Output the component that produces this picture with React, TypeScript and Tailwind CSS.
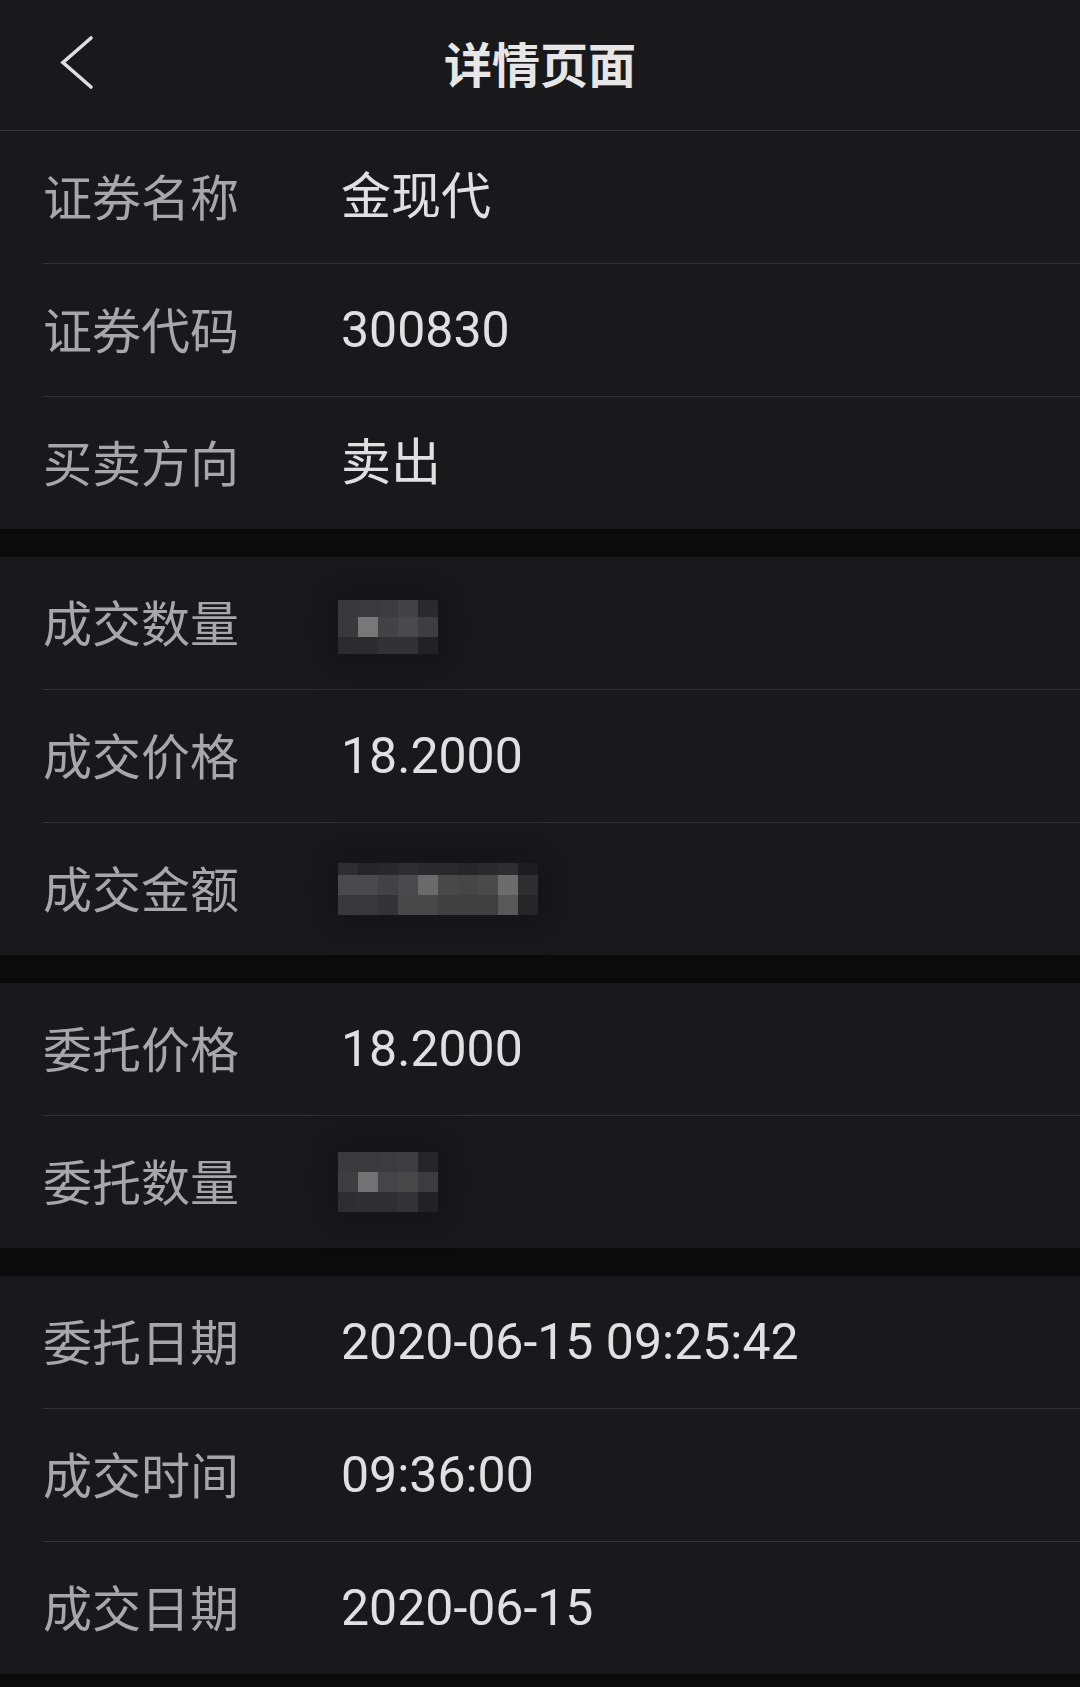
import React from "react";

type MosaicRow = { h: string; cells: string[] };

const mosaicQty: MosaicRow[] = [
  { h: "h-[17px]", cells: ["bg-[#39393b]", "bg-[#3a3a3c]", "bg-[#3c3c3e]", "bg-[#434345]", "bg-[#2a2a2c]"] },
  { h: "h-[20px]", cells: ["bg-[#39393b]", "bg-[#787878]", "bg-[#434345]", "bg-[#4a4a4c]", "bg-[#3e3e40]"] },
  { h: "h-[17px]", cells: ["bg-[#2c2c2e]", "bg-[#2c2c2e]", "bg-[#323234]", "bg-[#323234]", "bg-[#222224]"] },
];

const mosaicAmount: MosaicRow[] = [
  {
    h: "h-[12px]",
    cells: ["bg-[#2e2e30]", "bg-[#262628]", "bg-[#28282a]", "bg-[#2e2e30]", "bg-[#2a2a2c]", "bg-[#2a2a2c]", "bg-[#262628]", "bg-[#2a2a2c]", "bg-[#2e2e30]", "bg-[#1c1c1e]"],
  },
  {
    h: "h-[20px]",
    cells: ["bg-[#4a4a4c]", "bg-[#4a4a4c]", "bg-[#434345]", "bg-[#4a4a4c]", "bg-[#6a6a6a]", "bg-[#484848]", "bg-[#464646]", "bg-[#4a4a4a]", "bg-[#6c6c6c]", "bg-[#2e2e30]"],
  },
  {
    h: "h-[20px]",
    cells: ["bg-[#39393b]", "bg-[#39393b]", "bg-[#333335]", "bg-[#474747]", "bg-[#474747]", "bg-[#404040]", "bg-[#404040]", "bg-[#404040]", "bg-[#585858]", "bg-[#262628]"],
  },
];

const mosaicOrder: MosaicRow[] = [
  { h: "h-[20px]", cells: ["bg-[#3a3a3c]", "bg-[#3a3a3c]", "bg-[#3c3c3e]", "bg-[#3e3e40]", "bg-[#262628]"] },
  { h: "h-[20px]", cells: ["bg-[#3e3e40]", "bg-[#727272]", "bg-[#454547]", "bg-[#484849]", "bg-[#3c3c3e]"] },
  { h: "h-[20px]", cells: ["bg-[#2e2e30]", "bg-[#303032]", "bg-[#303032]", "bg-[#343436]", "bg-[#222224]"] },
];

function Mosaic({ rows, className }: { rows: MosaicRow[]; className?: string }) {
  return (
    <div className={"flex flex-col blur-[0.6px] shadow-[0_0_30px_12px_rgba(14,14,16,0.3)] " + (className ?? "")}>
      {rows.map((r, i) => (
        <div key={i} className={"flex " + r.h}>
          {r.cells.map((c, j) => (
            <div key={j} className={"w-[20px] h-full " + c} />
          ))}
        </div>
      ))}
    </div>
  );
}

type Item = { label: string; value?: string; mosaic?: React.ReactNode };

function Row({ item, first }: { item: Item; first: boolean }) {
  return (
    <div className="pl-[43px] bg-[#19191b]">
      <div
        className={
          "flex items-center " +
          (first ? "h-[132px]" : "h-[133px] border-t border-[#323234]")
        }
      >
        <div
          className="w-[298px] shrink-0 text-[49px] leading-none text-[#a7a7a9] mb-[5px]"
          style={{ fontFamily: '"Noto Sans CJK SC", sans-serif' }}
        >
          {item.label}
        </div>
        {item.value !== undefined ? (
          <div
            className="text-[50px] leading-none text-[#e0e0e0]"
            style={{ fontFamily: 'Roboto, "Noto Sans CJK SC", sans-serif' }}
          >
            {item.value}
          </div>
        ) : (
          <div className="-ml-[3px]">{item.mosaic}</div>
        )}
      </div>
    </div>
  );
}

function Section({ items }: { items: Item[] }) {
  return (
    <div className="flex flex-col bg-[#19191b]">
      {items.map((it, i) => (
        <Row key={i} item={it} first={i === 0} />
      ))}
    </div>
  );
}

export default function App() {
  const s1: Item[] = [
    { label: "证券名称", value: "金现代" },
    { label: "证券代码", value: "300830" },
    { label: "买卖方向", value: "卖出" },
  ];
  const s2: Item[] = [
    { label: "成交数量", mosaic: <Mosaic rows={mosaicQty} className="mt-[8px]" /> },
    { label: "成交价格", value: "18.2000" },
    { label: "成交金额", mosaic: <Mosaic rows={mosaicAmount} /> },
  ];
  const s3: Item[] = [
    { label: "委托价格", value: "18.2000" },
    { label: "委托数量", mosaic: <Mosaic rows={mosaicOrder} /> },
  ];
  const s4: Item[] = [
    { label: "委托日期", value: "2020-06-15 09:25:42" },
    { label: "成交时间", value: "09:36:00" },
    { label: "成交日期", value: "2020-06-15" },
  ];

  return (
    <div className="w-[1080px] h-[1687px] bg-[#0b0b0c] flex flex-col overflow-hidden">
      <div className="h-[131px] shrink-0 bg-[#19191b] border-b border-[#38383a] grid grid-cols-[1fr_auto_1fr] items-center">
        <div className="pl-[57px] flex items-center">
          <svg width="40" height="60" viewBox="0 0 40 60" fill="none">
            <path d="M34 3 L6 27.5 L34 52" stroke="#dedede" strokeWidth="3.6" strokeLinecap="round" strokeLinejoin="miter" />
          </svg>
        </div>
        <div
          className="text-[48px] font-bold leading-none text-[#e6e6e6] mb-[6px]"
          style={{ fontFamily: '"Noto Sans CJK SC", sans-serif' }}
        >
          详情页面
        </div>
        <div />
      </div>
      <div className="flex flex-col gap-[28px]">
        <Section items={s1} />
        <Section items={s2} />
        <Section items={s3} />
        <Section items={s4} />
      </div>
    </div>
  );
}
